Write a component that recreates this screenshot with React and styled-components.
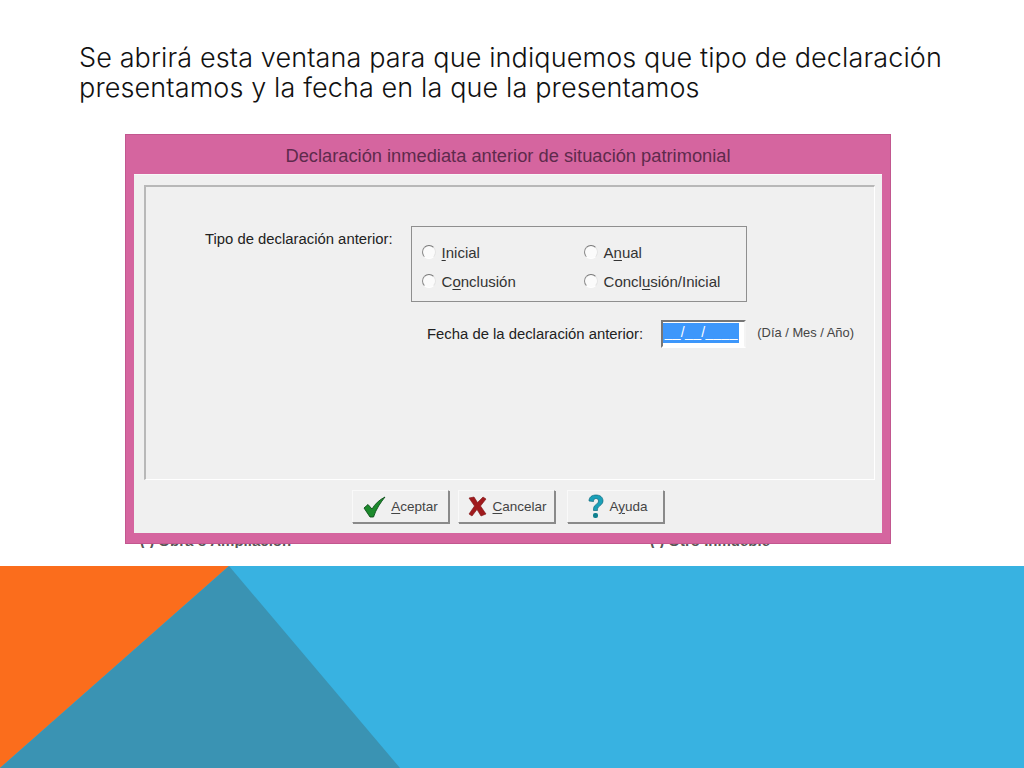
import React from "react";
import styled, { createGlobalStyle } from "styled-components";

const GlobalStyle = createGlobalStyle`
  html, body {
    margin: 0;
    padding: 0;
    background: #ffffff;
  }
`;

const Slide = styled.div`
  width: 1024px;
  height: 768px;
  overflow: hidden;
  display: flex;
  flex-flow: column;
  background: #ffffff;
  font-family: "Liberation Sans", Arial, sans-serif;
`;

const Heading = styled.h1`
  margin: 0;
  height: 134px;
  box-sizing: border-box;
  padding: 43px 0 0 79px;
  font-family: Inter, "Liberation Sans", sans-serif;
  font-size: 27px;
  font-weight: 300;
  letter-spacing: 0.12px;
  line-height: 30px;
  color: #111111;
  white-space: nowrap;
`;

const WindowArea = styled.div`
  margin-left: 125px;
  width: 766px;
`;

const Window = styled.div`
  box-sizing: border-box;
  width: 766px;
  height: 410px;
  display: flex;
  flex-flow: column;
  background: #d5659f;
  border: 1px solid #c2578f;
  padding: 0 8px 10px 8px;
`;

const TitleBar = styled.div`
  height: 39px;
  display: flex;
  align-items: center;
  justify-content: center;
  padding-top: 3px;
  box-sizing: border-box;
  font-size: 18.3px;
  color: #5e2a4c;
`;

const Body = styled.div`
  flex: 1;
  display: flex;
  flex-flow: column;
  background: #f0f0f0;
  border-top: 1px solid #f8f8f8;
  padding: 10px 7px 0 10px;
`;

const Panel = styled.div`
  box-sizing: border-box;
  height: 295px;
  border: 1px solid #ffffff;
  border-top: 2px solid #b8b8b8;
  border-left: 2px solid #b8b8b8;
  padding: 40px 20px 0 59px;
`;

const FormRow = styled.div`
  display: flex;
  align-items: flex-start;
`;

const Label = styled.div`
  font-size: 14.85px;
  color: #222222;
  line-height: 18px;
  white-space: nowrap;
`;

const TypeLabel = styled(Label)`
  margin-top: 3px;
  margin-right: 18px;
`;

const GroupBox = styled.div`
  box-sizing: border-box;
  width: 336px;
  height: 76px;
  margin-top: -1px;
  border: 1px solid #8f8f8f;
  display: grid;
  grid-template-columns: 162px 1fr;
  grid-template-rows: 29px 29px;
  padding: 11px 0 0 10px;
`;

const RadioItem = styled.label`
  display: flex;
  align-items: center;
  gap: 6px;
  font-size: 15px;
  color: #333333;
  u {
    text-underline-offset: 2px;
  }
`;

const RadioCircle = styled.span`
  box-sizing: border-box;
  flex: none;
  width: 14px;
  height: 14px;
  margin-top: -2px;
  border-radius: 50%;
  background: #fbfbfb;
  border: 1px solid;
  border-color: #777777 #e4e4e4 #ffffff #8a8a8a;
`;

const DateRow = styled(FormRow)`
  margin-top: 18px;
  padding-left: 222px;
`;

const DateLabel = styled(Label)`
  margin-top: 5px;
  margin-right: 18px;
`;

const DateInput = styled.div`
  box-sizing: border-box;
  width: 86px;
  height: 28px;
  background: #ffffff;
  border: 2px solid;
  border-color: #777777 #f4f4f4 #ffffff #777777;
  padding: 1px 5px 3px 0;
  display: flex;
`;

const DateValue = styled.div`
  flex: 1;
  background: #3d97fb;
  color: #ffffff;
  font-size: 14px;
  line-height: 19px;
  text-align: center;
  letter-spacing: 0.3px;
  white-space: nowrap;
`;

const Hint = styled.div`
  margin-left: 11px;
  margin-top: 4px;
  font-size: 12.9px;
  line-height: 18px;
  color: #444444;
  white-space: nowrap;
`;

const ButtonBar = styled.div`
  display: flex;
  gap: 9px;
  padding: 10px 0 0 208px;
`;

const Button = styled.div`
  box-sizing: border-box;
  width: 97px;
  height: 33px;
  margin-left: ${(p) => p.$shift || 0}px;
  padding-left: ${(p) => p.$inset || 0}px;
  display: flex;
  align-items: center;
  justify-content: center;
  gap: 5px;
  background: #f0f0f0;
  border: 1px solid;
  border-color: #f9f9f9 #8a8a8a #8a8a8a #f9f9f9;
  box-shadow: 1px 1px 0 #8a8a8a;
  font-size: 13.5px;
  color: #444444;
  u {
    text-underline-offset: 2px;
  }
`;

const ClippedStrip = styled.div`
  height: 4px;
  overflow: hidden;
  display: flex;
  padding-left: 15px;
  font-size: 15px;
  font-weight: 700;
  line-height: 14px;
  color: #555555;
`;

const ClippedText = styled.div`
  width: ${(p) => p.width}px;
  margin-top: -10px;
  white-space: nowrap;
`;

const Band = styled.div`
  margin-top: 18px;
  flex: 1;
  background: #38b2e1;
  svg {
    display: block;
  }
`;

const AcceptIcon = () => (
  <svg width="23" height="22" viewBox="0 0 23 22">
    <path d="M1 12 L5 8.5 L9 13 C12 8 16 4 22 1 C18 6 13 13 10.5 21 L7 21 Z" fill="#1c8a2c" stroke="#0b4f18" strokeWidth="0.9" />
  </svg>
);

const CancelIcon = () => (
  <svg width="19" height="21" viewBox="0 0 19 21">
    <path d="M1 2 L6 1 L9.5 6.5 L15 1 L18 3 L12.5 10 L18 18 L13 20 L9 13.5 L4 20 L1 18 L6.5 10 Z" fill="#a01a1d" stroke="#7c1416" strokeWidth="0.6" />
  </svg>
);

const HelpIcon = () => (
  <svg width="17" height="25" viewBox="0 0 17 25">
    <path d="M2 7 C2 3 5 1 9 1 C13 1 16 3 16 7 C16 10 13 11.5 11.5 13 C10.5 14 10.5 15 10.5 16.5 L6.5 16.5 C6.5 14 6.5 12.5 8.5 11 C10.5 9.5 11.5 8.5 11.5 7 C11.5 5.5 10.5 4.5 9 4.5 C7.5 4.5 6.5 5.5 6.5 7.5 Z" fill="#1aa0b8" stroke="#10697c" strokeWidth="0.7" />
    <rect x="6" y="19" width="5" height="5" rx="2" fill="#10808f" />
  </svg>
);

const Radio = ({ children }) => (
  <RadioItem>
    <RadioCircle />
    <span>{children}</span>
  </RadioItem>
);

const App = () => (
  <>
    <GlobalStyle />
    <Slide>
      <Heading>
        Se abrirá esta ventana para que indiquemos que tipo de declaración
        <br />
        presentamos y la fecha en la que la presentamos
      </Heading>
      <WindowArea>
        <Window>
          <TitleBar>Declaración inmediata anterior de situación patrimonial</TitleBar>
          <Body>
            <Panel>
              <FormRow>
                <TypeLabel>Tipo de declaración anterior:</TypeLabel>
                <GroupBox>
                  <Radio><u>I</u>nicial</Radio>
                  <Radio>A<u>n</u>ual</Radio>
                  <Radio>C<u>o</u>nclusión</Radio>
                  <Radio>Concl<u>u</u>sión/Inicial</Radio>
                </GroupBox>
              </FormRow>
              <DateRow>
                <DateLabel>Fecha de la declaración anterior:</DateLabel>
                <DateInput>
                  <DateValue>__/__/____</DateValue>
                </DateInput>
                <Hint>(Día / Mes / Año)</Hint>
              </DateRow>
            </Panel>
            <ButtonBar>
              <Button><AcceptIcon /><span><u>A</u>ceptar</span></Button>
              <Button $inset={2}><CancelIcon /><span><u>C</u>ancelar</span></Button>
              <Button $shift={3} $inset={4}><HelpIcon /><span>A<u>y</u>uda</span></Button>
            </ButtonBar>
          </Body>
        </Window>
        <ClippedStrip>
          <ClippedText width={510}>( ) Obra o Ampliación</ClippedText>
          <ClippedText width={130}>( ) Otro Inmueble</ClippedText>
        </ClippedStrip>
      </WindowArea>
      <Band>
        <svg width="1024" height="202" viewBox="0 0 1024 202">
          <polygon points="0,0 229,0 0,202" fill="#fb6d1c" />
          <polygon points="229,0 400,202 0,202" fill="#3a93b3" />
        </svg>
      </Band>
    </Slide>
  </>
);

export default App;
